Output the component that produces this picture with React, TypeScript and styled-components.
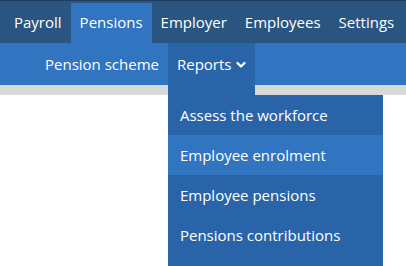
import React from "react";
import styled, { createGlobalStyle } from "styled-components";

const COLORS = {
  bar: "#2b5581",
  active: "#3174c0",
  open: "#2a64a8",
  strip: "#d9d9d9",
  text: "#ffffff",
};

const GlobalStyle = createGlobalStyle`
  body {
    margin: 0;
    background: #ffffff;
    font-family: "Open Sans", "Liberation Sans", sans-serif;
  }
`;

const topItems = ["Payroll", "Pensions", "Employer", "Employees", "Settings"];
const reportItems = [
  "Assess the workforce",
  "Employee enrolment",
  "Employee pensions",
  "Pensions contributions",
];

function Chevron() {
  return (
    <svg width="10" height="8" viewBox="0 0 10 8" style={{ marginLeft: 5, marginTop: 3 }}>
      <path d="M1.5 2 L5 5.5 L8.5 2" stroke="#fff" strokeWidth="2.2" fill="none" strokeLinecap="round" strokeLinejoin="round" />
    </svg>
  );
}

export default function App() {
  return (
    <Page>
      <GlobalStyle />
      <TopBar>
        {topItems.map(item => (
          <TopTab key={item} $active={item === "Pensions"}>{item}</TopTab>
        ))}
      </TopBar>
      <SubBar>
        <SubTab>Pension scheme</SubTab>
        <ReportsWrap>
          <SubTab $open>
            Reports
            <Chevron />
          </SubTab>
          <Dropdown>
            {reportItems.map(item => (
              <DropItem key={item} $hover={item === "Employee enrolment"}>{item}</DropItem>
            ))}
          </Dropdown>
        </ReportsWrap>
      </SubBar>
      <Strip />
    </Page>
  );
}

const Page = styled.div`
  width: 406px;
  height: 266px;
  overflow: hidden;
  position: relative;
`;

const TopBar = styled.nav`
  display: flex;
  align-items: flex-end;
  height: 43px;
  padding-left: 5px;
  background: ${COLORS.bar};
  border-top: 1px solid #1f3d5e;
  box-sizing: border-box;
`;

const TopTab = styled.div<{ $active?: boolean }>`
  display: flex;
  align-items: center;
  height: 40px;
  padding: 0 9px 2px;
  box-sizing: border-box;
  font-size: 15px;
  color: ${COLORS.text};
  background: ${p => (p.$active ? COLORS.active : "transparent")};
`;

const SubBar = styled.div`
  display: flex;
  height: 42px;
  padding-left: 36px;
  background: ${COLORS.active};
`;

const ReportsWrap = styled.div`
  position: relative;
`;

const SubTab = styled.div<{ $open?: boolean }>`
  display: flex;
  align-items: center;
  height: 42px;
  padding: 0 9px 1px;
  box-sizing: border-box;
  font-size: 15px;
  color: ${COLORS.text};
  background: ${p => (p.$open ? COLORS.open : "transparent")};
  position: relative;
  z-index: 2;
  &::after {
    content: "";
    display: ${p => (p.$open ? "block" : "none")};
    position: absolute;
    left: 0;
    right: 0;
    top: 42px;
    height: 10px;
    background: ${COLORS.open};
  }
`;

const Dropdown = styled.ul`
  position: absolute;
  top: 52px;
  left: 0;
  width: 215px;
  height: 200px;
  margin: 0;
  padding: 0;
  list-style: none;
  background: ${COLORS.open};
  z-index: 3;
`;

const DropItem = styled.li<{ $hover?: boolean }>`
  display: flex;
  align-items: center;
  height: 40px;
  padding: 0 12px 1px;
  box-sizing: border-box;
  font-size: 15px;
  color: ${COLORS.text};
  background: ${p => (p.$hover ? COLORS.active : "transparent")};
`;

const Strip = styled.div`
  height: 10px;
  background: ${COLORS.strip};
`;
